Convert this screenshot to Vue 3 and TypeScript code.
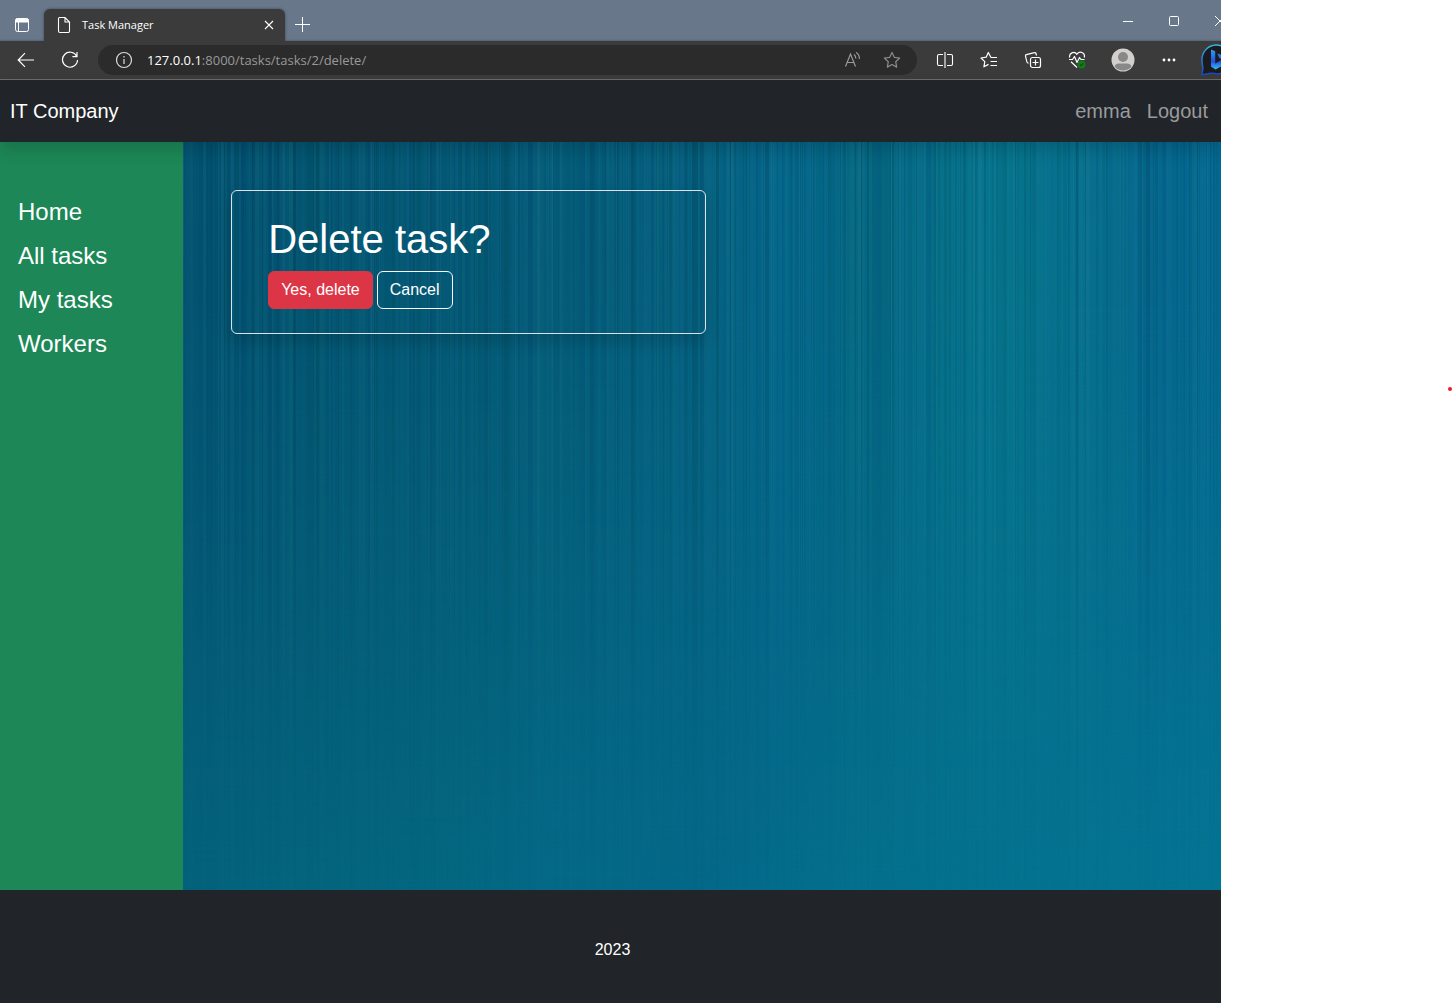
<script setup lang="ts">
interface NavLink {
  label: string
  href: string
}

const menu: NavLink[] = [
  { label: 'Home', href: '#home' },
  { label: 'All tasks', href: '#tasks' },
  { label: 'My tasks', href: '#my-tasks' },
  { label: 'Workers', href: '#workers' },
]

// Fine vertical streaks of the wallpaper, from a seeded generator so they never change.
function buildStreaks(width: number): string {
  let seed = 20231
  const next = (): number => {
    seed = (seed * 16807) % 2147483647
    return seed / 2147483647
  }
  const tints = ['0, 30, 60', '0, 45, 110', '0, 50, 60', '60, 140, 170', '30, 110, 170', '30, 130, 130']
  const stops: string[] = []
  let x = 0
  while (x < width) {
    const end = x + 1 + Math.floor(next() * next() * 4)
    const tint = tints[Math.floor(next() * tints.length)]
    const colour = `rgba(${tint}, ${(next() * 0.2).toFixed(2)})`
    stops.push(`${colour} ${x}px`, `${colour} ${end}px`)
    x = end
  }
  return `linear-gradient(90deg, ${stops.join(', ')})`
}

const streaks = { backgroundImage: buildStreaks(1400) }
</script>

<template>
  <div class="desktop">
    <div class="window">
      <header class="tabstrip">
        <button class="icon-btn tab-actions" type="button" aria-label="Tab actions">
          <svg width="16" height="16" viewBox="0 0 16 16" fill="none" stroke="#fff">
            <rect x="1.5" y="1.5" width="13" height="13" rx="2" />
            <path d="M2 2h12v3H2z" fill="#fff" />
            <path d="M4.500 5v9.500" />
          </svg>
        </button>
        <div class="tab">
          <svg width="14" height="18" viewBox="0 0 14 18" fill="none" stroke="#fff" stroke-width="1.100">
            <path d="M2.500 1.500H8l4.500 4.500v9a1.500 1.500 0 0 1-1.500 1.500H3A1.500 1.500 0 0 1 1.500 15V2.500a1 1 0 0 1 1-1zM8 1.500V6h4.500" />
          </svg>
          <span class="tab-title">Task Manager</span>
          <button class="icon-btn tab-close" type="button" aria-label="Close tab">
            <svg width="10" height="10" viewBox="0 0 10 10" stroke="#fff" stroke-width="1.100"><path d="M1 1l8 8M9 1L1 9" /></svg>
          </button>
        </div>
        <button class="icon-btn new-tab" type="button" aria-label="New tab">
          <svg width="15" height="15" viewBox="0 0 15 15" stroke="#fff"><path d="M7.500 0v15M0 7.500h15" /></svg>
        </button>
        <div class="window-controls">
          <button class="icon-btn control" type="button" aria-label="Minimise">
            <svg width="10" height="10" viewBox="0 0 10 10" stroke="#fff"><path d="M0 5.500h10" /></svg>
          </button>
          <button class="icon-btn control" type="button" aria-label="Maximise">
            <svg width="10" height="10" viewBox="0 0 10 10" fill="none" stroke="#fff"><rect x=".5" y=".5" width="9" height="9" rx="1" /></svg>
          </button>
          <button class="icon-btn control control-close" type="button" aria-label="Close">
            <svg width="10" height="10" viewBox="0 0 10 10" stroke="#fff"><path d="M0 0l10 10M10 0L0 10" /></svg>
          </button>
        </div>
      </header>

      <div class="toolbar">
        <button class="icon-btn tool" type="button" aria-label="Back">
          <svg width="18" height="16" viewBox="0 0 18 16" fill="none" stroke="#fff" stroke-width="1.200"><path d="M17 8H1.500M8 1.200L1.200 8 8 14.800" /></svg>
        </button>
        <button class="icon-btn tool" type="button" aria-label="Refresh">
          <svg width="18" height="18" viewBox="0 0 18 18" fill="none" stroke="#fff" stroke-width="1.200"><path d="M15.800 5.500A7.500 7.500 0 1 0 16.500 9M16 1v4.600h-4.600" /></svg>
        </button>
        <div class="address">
          <svg width="18" height="18" viewBox="0 0 18 18" fill="none" stroke="#ddd" stroke-width="1.200">
            <circle cx="9" cy="9" r="7.500" /><path d="M9 8v5M9 5v1.500" />
          </svg>
          <span class="url"><b>127.0.0.1</b>:8000/tasks/tasks/2/delete/</span>
          <button class="icon-btn address-btn" type="button" aria-label="Read aloud">
            <svg width="18" height="18" viewBox="0 0 18 18" fill="none" stroke="#9a9a9a" stroke-width="1.200">
              <path d="M2.500 15.500L7.500 3l5 12.500M4.300 11.500h6.400M11 3.500q2 1.500 1.800 4M13 1.500q3.800 2.200 3.300 6.500" />
            </svg>
          </button>
          <button class="icon-btn address-btn" type="button" aria-label="Add to favourites">
            <svg width="18" height="18" viewBox="0 0 18 18" fill="none" stroke="#8c8c8c" stroke-width="1.200" stroke-linejoin="round">
              <path d="M9 1.400l2.300 4.900 5.400.7-4 3.700 1 5.400L9 13.500l-4.700 2.600 1-5.400-4-3.700 5.400-.7z" />
            </svg>
          </button>
        </div>
        <button class="icon-btn tool" type="button" aria-label="Split screen">
          <svg width="18" height="18" viewBox="0 0 18 18" fill="none" stroke="#fff" stroke-width="1.100">
            <path d="M7 3.500H3A1.500 1.500 0 0 0 1.500 5v8A1.500 1.500 0 0 0 3 14.500h4M11 3.500h4A1.500 1.500 0 0 1 16.500 5v8a1.500 1.500 0 0 1-1.500 1.500h-4M9 1v16" />
          </svg>
        </button>
        <button class="icon-btn tool" type="button" aria-label="Favourites">
          <svg width="18" height="18" viewBox="0 0 18 18" fill="none" stroke="#fff" stroke-width="1.200" stroke-linejoin="round">
            <path d="M17 6.500h-6L8.300 1.500 6.200 6.200 1 7l3.800 3.600-.9 5.200 4.600-2.400M10.500 10.500H17M10.500 14.500H17" />
          </svg>
        </button>
        <button class="icon-btn tool" type="button" aria-label="Collections">
          <svg width="18" height="18" viewBox="0 0 18 18" fill="none" stroke="#fff" stroke-width="1.200">
            <rect x="6.500" y="6.500" width="10" height="10" rx="2" />
            <path d="M11.500 8.500v6M8.500 11.500h6M12.500 4.500l-.5-2a1.300 1.300 0 0 0-1.600-.9L2.400 3.600a1.300 1.300 0 0 0-.9 1.600l1.400 5.600a2 2 0 0 0 1.600 1.400" />
          </svg>
        </button>
        <button class="icon-btn tool" type="button" aria-label="Browser essentials">
          <svg width="18" height="18" viewBox="0 0 18 18" fill="none" stroke="#fff" stroke-width="1.200" stroke-linejoin="round">
            <path d="M1.700 6.500A4 4 0 0 1 8.900 3.300 4 4 0 0 1 16.200 6.500M1 8.500h3.500L6.500 5.500l2.500 6 2.500-5L13 8.500h3.500M3 10.800l6 5.700" />
            <circle cx="13.500" cy="13.500" r="4" fill="#137a1c" stroke="none" />
            <path d="M11.800 13.600l1.200 1.100 2.200-2.300" stroke="#0a4f10" />
          </svg>
        </button>
        <button class="icon-btn tool profile" type="button" aria-label="Profile">
          <svg width="24" height="24" viewBox="0 0 24 24">
            <circle cx="12" cy="12" r="11.500" fill="#d2d0ce" />
            <circle cx="12" cy="9" r="5" fill="#8a8886" />
            <path d="M3.500 18.500Q4.500 15.500 8 15.500h8q3.500 0 4.500 3a11 11 0 0 1-17 0z" fill="#8a8886" />
          </svg>
        </button>
        <button class="icon-btn tool" type="button" aria-label="Settings and more">
          <svg width="14" height="4" viewBox="0 0 14 4" fill="#fff"><circle cx="2" cy="2" r="1.400" /><circle cx="7" cy="2" r="1.400" /><circle cx="12" cy="2" r="1.400" /></svg>
        </button>
        <button class="icon-btn bing" type="button" aria-label="Bing chat">
          <svg width="32" height="32" viewBox="0 0 32 32">
            <defs>
              <linearGradient id="bubble" x1="0" y1="0" x2="0" y2="1"><stop offset="0" stop-color="#35b6e8" /><stop offset="1" stop-color="#1748c8" /></linearGradient>
              <linearGradient id="letter" x1="0" y1="0" x2="0" y2="1"><stop offset="0" stop-color="#2f9df5" /><stop offset=".6" stop-color="#2350e0" /><stop offset="1" stop-color="#34c3f5" /></linearGradient>
            </defs>
            <path d="M1 30.500L2 24Q1 20 1 16A14.500 14.500 0 1 1 16 30Q12 28.500 8 29.500 4 30.500 1 30.500z" fill="#1b1b1f" stroke="url(#bubble)" stroke-width="1.400" />
            <path d="M10 5.500l4.200 1.800v12.200l7-4-3-1.500-1.800-4.500L27 13v5.500L14.500 25.500 10 22.500z" fill="url(#letter)" />
          </svg>
        </button>
      </div>

      <nav class="navbar">
        <a class="brand" href="#home">IT Company</a>
        <div class="account">
          <a href="#profile">emma</a>
          <a href="#logout">Logout</a>
        </div>
      </nav>

      <div class="content">
        <aside class="sidebar">
          <ul>
            <li v-for="item in menu" :key="item.href"><a :href="item.href">{{ item.label }}</a></li>
          </ul>
        </aside>
        <main class="main">
          <div class="wall wall-top"></div>
          <div class="wall wall-streaks" :style="streaks"></div>
          <form class="card" @submit.prevent>
            <h1>Delete task?</h1>
            <div class="actions">
              <button class="btn btn-danger" type="submit">Yes, delete</button>
              <a class="btn btn-outline" href="#tasks">Cancel</a>
            </div>
          </form>
        </main>
      </div>

      <footer class="footer">2023</footer>
    </div>
    <div class="margin"><span class="dot"></span></div>
  </div>
</template>

<style>
body {
  margin: 0;
  background: #fff;
}
</style>

<style scoped>
* {
  box-sizing: border-box;
}
a {
  text-decoration: none;
}
.desktop {
  display: flex;
  min-height: 100vh;
  font-family: "Liberation Sans", Arial, sans-serif;
}
.window {
  flex: 1;
  min-width: 0;
  display: flex;
  flex-direction: column;
  overflow: hidden;
}
.margin {
  flex: 0 0 232px;
  display: flex;
  justify-content: flex-end;
  padding: 387px 1px 0 0;
}
.dot {
  width: 4px;
  height: 4px;
  border-radius: 50%;
  background: #ed1c24;
}
.icon-btn {
  display: flex;
  align-items: center;
  justify-content: center;
  flex: none;
  padding: 0;
  border: 0;
  background: none;
}
.icon-btn svg {
  flex: none;
}

/* Browser chrome */
.tabstrip {
  display: flex;
  height: 41px;
  background: linear-gradient(#69778b, #69778b 39px, #566276);
  font-family: "Open Sans", "Noto Sans", sans-serif;
}
.tab-actions {
  width: 44px;
  padding-top: 8px;
}
.tab {
  display: flex;
  align-items: center;
  width: 241px;
  margin-top: 9px;
  padding: 0 6px 0 13px;
  border-radius: 6px 6px 0 0;
  background: #3b3b3b;
  box-shadow: 0 0 3px rgba(0, 0, 0, 0.4);
}
.tab-title {
  flex: 1;
  margin-left: 11px;
  color: #fff;
  font-size: 11px;
  line-height: 16px;
}
.tab-close {
  width: 20px;
  height: 20px;
}
.new-tab {
  width: 34px;
  padding-top: 8px;
}
.window-controls {
  display: flex;
  margin-left: auto;
}
.control {
  width: 46px;
}
.control-close {
  justify-content: flex-start;
  width: 24px;
  padding-left: 18px;
  overflow: hidden;
}
.toolbar {
  display: flex;
  align-items: center;
  height: 39px;
  padding-left: 4px;
  border-bottom: 1px solid #6b6b6b;
  background: #3b3b3b;
  font-family: "Open Sans", "Noto Sans", sans-serif;
}
.tool {
  width: 44px;
  height: 38px;
}
.profile {
  width: 48px;
}
.bing {
  justify-content: flex-start;
  width: 30px;
  height: 38px;
  padding-left: 10px;
  overflow: hidden;
}
.address {
  flex: 1;
  min-width: 0;
  display: flex;
  align-items: center;
  height: 30px;
  margin: 0 6px;
  padding: 0 5px 0 17px;
  border-radius: 15px;
  background: #2b2b2b;
}
.url {
  flex: 1;
  margin-left: 14px;
  color: #999;
  font-size: 13px;
  line-height: 20px;
  white-space: nowrap;
}
.url b {
  color: #fff;
  font-weight: 400;
}
.address-btn {
  width: 40px;
  height: 30px;
}

/* Page */
.navbar {
  position: relative;
  z-index: 1;
  display: flex;
  align-items: center;
  justify-content: space-between;
  height: 62px;
  padding: 0 13px 0 10px;
  background: #212529;
  box-shadow: 0 8px 16px rgba(0, 0, 0, 0.15);
  font-size: 20px;
  line-height: 30px;
}
.brand {
  color: #fff;
}
.account {
  display: flex;
  gap: 16px;
}
.account a {
  color: #999b9d;
}
.content {
  flex: 1;
  display: flex;
}
.sidebar {
  flex: 0 0 15%;
  padding: 52px 18px;
  background: #1d8757;
}
.sidebar ul {
  display: flex;
  flex-direction: column;
  gap: 8px;
  margin: 0;
  padding: 0;
  list-style: none;
}
.sidebar a {
  display: block;
  color: #fff;
  font-size: 24px;
  line-height: 36px;
}
.main {
  position: relative;
  flex: 1;
  min-width: 0;
  padding: 48px;
  background: linear-gradient(100deg, #05607a, #05677f 30%, #056a87 42%, #05698a 56%, #05718e 70%, #057594);
}
.wall {
  position: absolute;
  inset: 0;
}
.wall-top {
  background: linear-gradient(90deg, #03526f, #045773 20%, #055d79 38%, #05607e 50%, #05688a 58%, #056883 65%, #066f89 72%, #06758c 78%, #06708c 86%, #05688d 93%, #056a92);
  mask-image: linear-gradient(#000 20%, transparent);
}
.wall-streaks {
  mask-image: linear-gradient(#000, rgba(0, 0, 0, 0.6) 45%, rgba(0, 0, 0, 0.2) 75%, rgba(0, 0, 0, 0.1));
}
.card {
  position: relative;
  width: 475px;
  max-width: 100%;
  padding: 24px 36px;
  border: 1px solid #dee2e6;
  border-radius: 6px;
  box-shadow: 0 8px 16px rgba(0, 0, 0, 0.15);
}
h1 {
  margin: 0 0 8px;
  color: #fff;
  font-size: 40px;
  font-weight: 400;
  line-height: 48px;
}
.actions {
  display: flex;
  gap: 4px;
}
.btn {
  padding: 6px 12px;
  border: 1px solid;
  border-radius: 6px;
  color: #fff;
  font-family: inherit;
  font-size: 16px;
  line-height: 24px;
}
.btn-danger {
  border-color: #dc3545;
  background: #dc3545;
}
.btn-outline {
  border-color: #f8f9fa;
}
.footer {
  padding: 48px 0 41px 4px;
  background: #212529;
  color: #fff;
  font-size: 16px;
  line-height: 24px;
  text-align: center;
}
</style>
